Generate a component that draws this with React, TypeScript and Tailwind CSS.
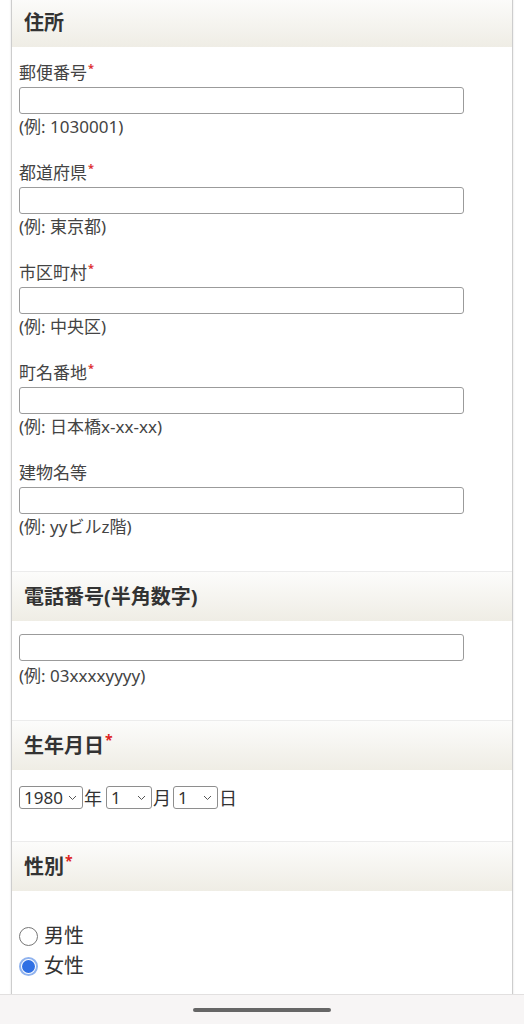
import React from "react";

const font = { fontFamily: '"Noto Sans", "Noto Sans CJK JP", sans-serif' };

function Req({ big }: { big?: boolean }) {
  return (
    <span
      className={
        big
          ? "relative -top-[8px] ml-[1px] text-[14px] font-bold text-[#d22]"
          : "relative -top-[7px] ml-[1px] text-[11px] font-bold text-[#d33]"
      }
    >
      *
    </span>
  );
}

function Header({ children, first }: { children: React.ReactNode; first?: boolean }) {
  return (
    <div
      className={
        "flex h-[50px] items-center bg-linear-to-b from-[#fcfcfb] to-[#efede5] px-[12px] text-[20px] font-bold text-[#333] " +
        (first ? "-mt-[3px]" : "border-t border-[#ececec]")
      }
    >
      <span className="mt-[1px]">{children}</span>
    </div>
  );
}

function Field({ label, example, required }: { label: string; example: string; required?: boolean }) {
  return (
    <div className="mb-[20px]">
      <div className="h-[26px] text-[17px] leading-[26px] text-[#444]">
        {label}
        {required && <Req />}
      </div>
      <input
        type="text"
        className="mt-[1px] block h-[27px] w-[445px] rounded-[3px] border border-[#9b9b9b] bg-white"
      />
      <div className="h-[26px] text-[17px] leading-[26px] text-[#444]">{example}</div>
    </div>
  );
}

function Select({ value, width }: { value: string; width: number }) {
  const w = width === 64 ? "w-[64px]" : width === 46 ? "w-[46px]" : "w-[45px]";
  return (
    <div className={"relative flex h-[23px] items-center rounded-[3px] border border-[#8e8e8e] bg-white pl-[4px] text-[17px] text-[#333] " + w}>
      <span className="leading-none">{value}</span>
      <svg className="absolute right-[5px] top-[8px]" width="9" height="6" viewBox="0 0 9 6">
        <path d="M1 1 L4.5 4.5 L8 1" fill="none" stroke="#555" strokeWidth="1" />
      </svg>
    </div>
  );
}

export default function App() {
  return (
    <div className="min-h-[1024px] bg-white" style={font}>
      <div className="ml-[11px] min-h-[1040px] w-[502px] border-x border-[#cdcdcd] bg-white shadow-[0_0_2px_rgba(0,0,0,0.12)]">
        <Header first>住所</Header>
        <div className="px-[7px] pt-[13px] pb-[11px]">
          <Field label="郵便番号" example="(例: 1030001)" required />
          <Field label="都道府県" example="(例: 東京都)" required />
          <Field label="市区町村" example="(例: 中央区)" required />
          <Field label="町名番地" example="(例: 日本橋x-xx-xx)" required />
          <Field label="建物名等" example="(例: yyビルz階)" />
        </div>

        <Header>電話番号(半角数字)</Header>
        <div className="px-[7px] pt-[13px] pb-[31px]">
          <input
            type="text"
            className="block h-[27px] w-[445px] rounded-[3px] border border-[#9b9b9b] bg-white"
          />
          <div className="mt-[2px] h-[26px] text-[17px] leading-[26px] text-[#444]">(例: 03xxxxyyyy)</div>
        </div>

        <Header>
          生年月日
          <Req big />
        </Header>
        <div className="flex h-[71px] items-start px-[7px] pt-[16px] text-[18px] text-[#333]">
          <div className="flex h-[23px] items-center">
            <Select value="1980" width={64} />
            <span className="ml-[1px] mr-[4px] leading-none">年</span>
            <Select value="1" width={46} />
            <span className="ml-[1px] mr-[2px] leading-none">月</span>
            <Select value="1" width={45} />
            <span className="ml-[1px] leading-none">日</span>
          </div>
        </div>

        <Header>
          性別
          <Req big />
        </Header>
        <div className="px-[7px] pt-[30px] text-[20px] text-[#333]">
          <label className="flex h-[30px] items-center">
            <span className="box-border h-[19px] w-[19px] rounded-full border-[1.5px] border-[#777] bg-white" />
            <span className="ml-[6px] leading-none">男性</span>
          </label>
          <label className="flex h-[30px] items-center">
            <span className="box-border flex h-[19px] w-[19px] items-center justify-center rounded-full border-2 border-[#8fb2ee] bg-white">
              <span className="h-[13px] w-[13px] rounded-full bg-[#2f6fe4]" />
            </span>
            <span className="ml-[6px] leading-none">女性</span>
          </label>
        </div>
      </div>

      <div className="fixed bottom-0 left-0 right-0 flex h-[30px] items-center justify-center border-t border-[#e2e0e0] bg-[#f7f5f5]">
        <div className="h-[4px] w-[138px] rounded-full bg-[#666]" />
      </div>
    </div>
  );
}
